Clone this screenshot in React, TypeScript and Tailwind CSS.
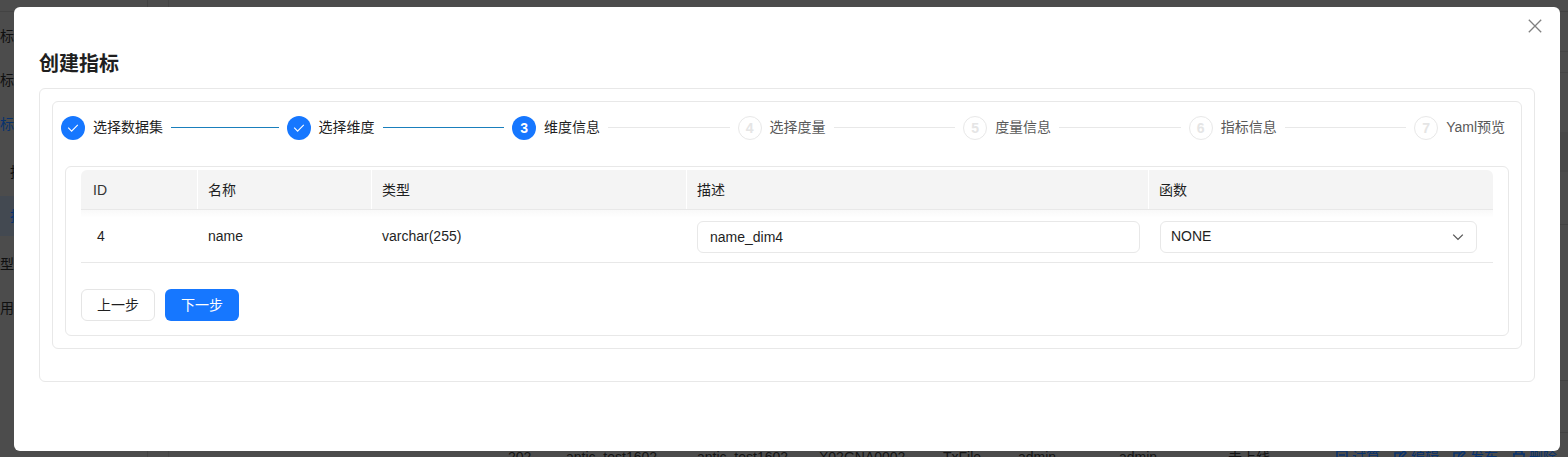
import React from "react";

const steps = ["选择数据集", "选择维度", "维度信息", "选择度量", "度量信息", "指标信息", "Yaml预览"];

function Check() {
  return (
    <svg width="12" height="12" viewBox="0 0 12 12" fill="none" stroke="white" strokeWidth="1.1">
      <path d="M1.2 5.6 4.6 9.2 10.8 2.8" />
    </svg>
  );
}

function Step({ label, index }: { label: string; index: number }) {
  const active = index < 3;
  const last = index === steps.length - 1;
  return (
    <div className={last ? "flex flex-none items-center" : "flex min-w-0 flex-1 items-center"}>
      <span
        className={
          active
            ? "flex size-6 flex-none items-center justify-center rounded-full bg-[#1677ff] text-sm font-bold text-white"
            : "flex size-6 flex-none items-center justify-center rounded-full border border-[#e8e8e8] text-sm font-bold text-[#e5e5e5]"
        }
      >
        {index < 2 ? <Check /> : index + 1}
      </span>
      <span
        className={
          active
            ? "ml-2 flex-none pb-[2px] leading-[22px] text-[#1f1f1f]"
            : "ml-2 flex-none pb-[2px] leading-[22px] text-[#595959]"
        }
      >
        {label}
      </span>
      {!last && (
        <span
          className={
            index < 2 ? "mx-2 mb-px h-px flex-1 bg-[#1a7fbc]" : "mx-2 mb-px h-px flex-1 bg-[#e8e8e8]"
          }
        />
      )}
    </div>
  );
}

const sideItems = [
  { text: "标", cls: "h-11 text-[#101010]" },
  { text: "标", cls: "h-11 text-[#101010]" },
  { text: "标", cls: "h-11 text-[#08326e]" },
  { text: "指", cls: "mt-0.5 h-12 pl-2.5 text-[#101010]" },
  { text: "指", cls: "h-10 bg-[#434951] pl-2.5 text-[#08326e]" },
  { text: "型", cls: "mt-1.5 h-11 text-[#101010]" },
  { text: "用", cls: "h-11 text-[#101010]" },
];

const columns = "grid grid-cols-[117px_174px_315px_462px_344px]";

function ActionIcon({ kind }: { kind: string }) {
  return (
    <svg className="mt-1" width="14" height="14" viewBox="0 0 14 14" fill="none" stroke="currentColor" strokeWidth="1.5">
      {kind === "save" && <path d="M2 1h10v12H2zM4 5h6" />}
      {kind === "edit" && <path d="M7 3H1v10h11V8M5 9l1-4 4-4 2 2-5 5z" />}
      {kind === "trash" && <path d="M1 4h12M4 4V1h6v3M2 4v9h10V4" />}
    </svg>
  );
}

function Action({ kind, label }: { kind: string; label: string }) {
  return (
    <span className="flex w-[59px] flex-none items-start gap-[3px] text-[#08326e]">
      <ActionIcon kind={kind} />
      {label}
    </span>
  );
}

export default function App() {
  return (
    <div className="relative h-[457px] w-[1568px] overflow-hidden bg-[#4c4c4c] font-['Liberation_Sans','Noto_Sans_CJK_SC',sans-serif] text-sm text-[#1f1f1f]">
      <div className="flex h-full">
        <div className="w-[148px] flex-none border-r border-[#434343]">
          <div className="mb-0.5 h-3 border-b border-[#434343]" />
          {sideItems.map((item, i) => (
            <div key={i} className={"flex items-center " + item.cls}>
              {item.text}
            </div>
          ))}
        </div>
        <div className="w-[21px] flex-none border-r border-[#454545]" />
        <div className="flex flex-1 flex-col">
          <div className="h-3 flex-none border-b border-[#434343]" />
          <div className="h-10 flex-none border-b border-[#454545]" />
          <div className="h-[21px] flex-none border-b border-[#454545]" />
          <div className="h-[59px] flex-none" />
          <div className="h-10 flex-none bg-[#484848]" />
          <div className="h-[53px] flex-none border-b border-[#434343]" />
          <div className="h-[156px] flex-none border-b border-[#434343]" />
          <div className="h-[52px] flex-none border-b border-[#434343]" />
          <div className="mt-[13px] flex h-[11px] flex-none items-start whitespace-nowrap pl-[339px] leading-[22px] text-[#141414]">
            <span className="w-[58px] flex-none">202</span>
            <span className="w-[131px] flex-none">antic_test1602</span>
            <span className="w-[122px] flex-none">antic_test1602</span>
            <span className="w-[124px] flex-none">X02GNA0002</span>
            <span className="w-[75px] flex-none">TxFile</span>
            <span className="w-[101px] flex-none">admin</span>
            <span className="w-[109px] flex-none">admin</span>
            <span className="w-[107px] flex-none">未上线</span>
            <Action kind="save" label="试算" />
            <Action kind="edit" label="编辑" />
            <Action kind="edit" label="发布" />
            <Action kind="trash" label="删除" />
          </div>
        </div>
      </div>

      <div className="absolute left-[14px] top-[7px] h-[444px] w-[1546px] rounded-md bg-white px-[25px] pt-[43px]">
        <svg
          className="absolute right-[18px] top-3 text-[#808080]"
          width="14"
          height="14"
          viewBox="0 0 14 14"
          stroke="currentColor"
          strokeWidth="1.3"
        >
          <path d="M.8.8 13.2 13.2M13.2.8.8 13.2" />
        </svg>
        <h1 className="h-[38px] text-xl leading-7 font-bold">创建指标</h1>
        <section className="h-[294px] w-[1496px] rounded-md border border-[#e8e8e8] p-3">
          <div className="h-[248px] rounded-md border border-[#e8e8e8] px-3 pt-[14px]">
            <div className="-ml-1 flex h-6 w-[1444px] items-center">
              {steps.map((label, i) => (
                <Step key={label} label={label} index={i} />
              ))}
            </div>
            <div className="mt-[26px] h-[170px] rounded-md border border-[#e8e8e8] px-[15px] pt-[3px]">
              <div className={columns + " h-10 overflow-hidden rounded-t-md border-b border-[#e8e8e8] bg-[#f4f4f4] leading-[41px]"}>
                <div className="h-[39px] border-r border-white pl-3 text-[#333]">ID</div>
                <div className="h-[39px] border-r border-white pl-[10px]">名称</div>
                <div className="h-[39px] border-r border-white pl-[10px]">类型</div>
                <div className="h-[39px] border-r border-white pl-[10px]">描述</div>
                <div className="h-[39px] pl-[10px]">函数</div>
              </div>
              <div className={columns + " h-[53px] items-center border-b border-[#e8e8e8] bg-linear-to-b from-[#f9f9f9] to-white to-15%"}>
                <div className="pl-4">4</div>
                <div className="pl-[10px]">name</div>
                <div className="pl-[10px]">varchar(255)</div>
                <div className="ml-[10px] mt-px flex h-8 w-[443px] items-center rounded-md border border-[#e8e8e8] bg-white pl-3">
                  name_dim4
                </div>
                <div className="ml-[11px] mt-px flex h-8 w-[317px] items-center justify-between rounded-md border border-[#e8e8e8] bg-white pr-3 pl-[10px]">
                  <span className="pb-px">NONE</span>
                  <svg width="12" height="12" viewBox="0 0 12 12" fill="none" stroke="#555" strokeWidth="1.3">
                    <path d="M1.2 3.6 6 8.4 10.8 3.6" />
                  </svg>
                </div>
              </div>
              <div className="mt-[26px] flex gap-[10px]">
                <button className="h-8 w-[74px] rounded-md border border-[#e5e5e5] bg-white">上一步</button>
                <button className="h-8 w-[74px] rounded-md bg-[#1677ff] text-white">下一步</button>
              </div>
            </div>
          </div>
        </section>
      </div>
    </div>
  );
}
